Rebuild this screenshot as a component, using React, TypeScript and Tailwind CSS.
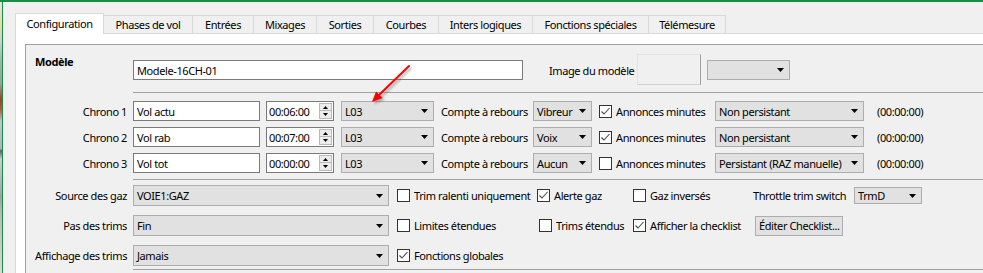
import React from "react";

function Caret() {
  return (
    <svg width="7" height="4" viewBox="0 0 7 4" className="shrink-0">
      <polygon points="0,0 7,0 3.5,4" fill="#000" />
    </svg>
  );
}

function Combo({ text, className }: { text: string; className: string }) {
  return (
    <div
      className={`flex items-center justify-between border border-[#adadad] bg-[#e1e1e1] pl-[3px] pr-[5px] ${className}`}
    >
      <span className="whitespace-nowrap">{text}</span>
      <Caret />
    </div>
  );
}

function TextInput({ text, className }: { text: string; className: string }) {
  return (
    <div className={`flex items-center border border-[#7a7a7a] bg-white pl-[3px] ${className}`}>
      <span className="whitespace-nowrap">{text}</span>
    </div>
  );
}

function Spin({ text }: { text: string }) {
  return (
    <div className="flex h-[20px] w-[68px] items-center justify-between border border-[#7a7a7a] bg-white pl-[2px] pr-[1px]">
      <span className="whitespace-nowrap">{text}</span>
      <div className="flex flex-col gap-0">
        <div className="flex h-[8px] w-[13px] items-center justify-center border border-[#b9b9b9] bg-[#ececec]">
          <svg width="5" height="3" viewBox="0 0 5 3">
            <polygon points="0,3 5,3 2.5,0" fill="#000" />
          </svg>
        </div>
        <div className="flex h-[8px] w-[13px] items-center justify-center border border-t-0 border-[#b9b9b9] bg-[#ececec]">
          <svg width="5" height="3" viewBox="0 0 5 3">
            <polygon points="0,0 5,0 2.5,3" fill="#000" />
          </svg>
        </div>
      </div>
    </div>
  );
}

function Check({ checked }: { checked: boolean }) {
  return (
    <div className="relative h-[13px] w-[13px] shrink-0 border border-[#333] bg-white">
      {checked && (
        <svg width="11" height="11" viewBox="0 0 11 11" className="absolute left-0 top-0">
          <polyline points="1.5,5.5 4,8 9.5,2" fill="none" stroke="#4a4a4a" strokeWidth="1.1" />
        </svg>
      )}
    </div>
  );
}

function CheckItem({ checked, label, className }: { checked: boolean; label: string; className: string }) {
  return (
    <div className={`flex items-center ${className}`}>
      <Check checked={checked} />
      <span className="ml-[4px] whitespace-nowrap">{label}</span>
    </div>
  );
}

const tabs: { label: string; w: string }[] = [
  { label: "Phases de vol", w: "w-[89px]" },
  { label: "Entrées", w: "w-[61px]" },
  { label: "Mixages", w: "w-[63px]" },
  { label: "Sorties", w: "w-[57px]" },
  { label: "Courbes", w: "w-[65px]" },
  { label: "Inters logiques", w: "w-[94px]" },
  { label: "Fonctions spéciales", w: "w-[116px]" },
  { label: "Télémesure", w: "w-[77px]" },
];

const chronos = [
  { n: "Chrono 1", name: "Vol actu", time: "00:06:00", mode: "Vibreur", ann: true, pers: "Non persistant" },
  { n: "Chrono 2", name: "Vol rab", time: "00:07:00", mode: "Voix", ann: true, pers: "Non persistant" },
  { n: "Chrono 3", name: "Vol tot", time: "00:00:00", mode: "Aucun", ann: false, pers: "Persistant (RAZ manuelle)" },
];

export default function App() {
  return (
    <div className="relative h-[273px] w-[983px] overflow-hidden bg-[#f0f0f0] font-['Noto_Sans',sans-serif] text-[11px] leading-none tracking-[-0.4px] text-black">
      <div className="h-[2px] bg-[#1b8a43]" />
      <div className="flex h-[271px]">
        <div className="w-[2px] bg-[linear-gradient(to_bottom,#dfe6e2_0%,#e8dca0_9%,#c9d6d6_14%,#9fb3ad_22%,#8fa8a0_30%,#a53d2a_36%,#b06040_40%,#b9c9cf_44%,#aab8be_54%,#5a6466_55%,#c8d0d0_58%,#9aa6a6_72%,#b8bcbc_78%,#d6dada_100%)]" />
        <div className="w-[1px] bg-[#1b8a43]" />
        <div className="flex flex-1 flex-col pl-[12px] pt-[11px]">
          {/* Tabs */}
          <div className="flex h-[21px] items-end">
            <div className="flex h-[21px] w-[89px] items-center justify-center border border-b-0 border-[#d9d9d9] bg-white pb-[1px]">
              Configuration
            </div>
            {tabs.map((t) => (
              <div
                key={t.label}
                className={`flex h-[19px] items-center justify-center border border-l-0 border-[#d9d9d9] bg-[#f0f0f0] ${t.w}`}
              >
                {t.label}
              </div>
            ))}
            <div className="h-[1px] flex-1 bg-[#d9d9d9]" />
          </div>
          {/* Pane */}
          <div className="flex flex-1 flex-col border-l border-[#d9d9d9] bg-white pl-[9px] pt-[10px]">
            <div className="flex flex-1 flex-col border-l border-t border-[#a0a0a0] bg-[#f0f0f0] pl-[9px]">
              {/* Modèle */}
              <div className="flex h-[47px] items-start pt-[9px]">
                <div className="mt-[-3px] flex h-[20px] w-[98px] items-center font-bold">Modèle</div>
                <TextInput text="Modele-16CH-01" className="mt-[6px] h-[20px] w-[390px]" />
                <div className="ml-[26px] mt-[6px] flex h-[20px] w-[88px] items-center whitespace-nowrap">
                  Image du modèle
                </div>
                <div className="h-[31px] w-[64px] border border-t-[#e3e3e3] border-l-[#e3e3e3] border-r-[#a0a0a0] border-b-[#d0d0d0] bg-[#f0f0f0]" />
                <Combo text="" className="ml-[6px] mt-[6px] h-[20px] w-[83px]" />
              </div>
              <div className="ml-[98px] h-px bg-[#a0a0a0]" />
              {/* Chronos */}
              <div className="flex flex-col gap-[6px] pt-[8px]">
                {chronos.map((c) => (
                  <div key={c.n} className="flex h-[20px] items-center">
                    <div className="w-[92px] whitespace-nowrap text-right">{c.n}</div>
                    <TextInput text={c.name} className="ml-[6px] h-[20px] w-[127px]" />
                    <div className="ml-[6px]">
                      <Spin text={c.time} />
                    </div>
                    <Combo text="L03" className="ml-[7px] h-[20px] w-[93px]" />
                    <div className="ml-[7px] w-[86px] whitespace-nowrap">Compte à rebours</div>
                    <Combo text={c.mode} className="ml-[6px] h-[20px] w-[59px]" />
                    <CheckItem checked={c.ann} label="Annonces minutes" className="ml-[7px] w-[116px]" />
                    <Combo text={c.pers} className="h-[20px] w-[149px]" />
                    <div className="ml-[13px] whitespace-nowrap">(00:00:00)</div>
                  </div>
                ))}
              </div>
              <div className="ml-[98px] mt-[6px] h-px bg-[#a0a0a0]" />
              {/* Bottom */}
              <div className="flex flex-col gap-[9px] pt-[5px]">
                <div className="flex h-[21px] items-center">
                  <div className="w-[92px] whitespace-nowrap text-right">Source des gaz</div>
                  <Combo text="VOIE1:GAZ" className="ml-[6px] h-[21px] w-[256px]" />
                  <CheckItem checked={false} label="Trim ralenti uniquement" className="ml-[8px] w-[140px]" />
                  <CheckItem checked={true} label="Alerte gaz" className="w-[96px]" />
                  <CheckItem checked={false} label="Gaz inversés" className="w-[120px]" />
                  <div className="w-[101px] whitespace-nowrap">Throttle trim switch</div>
                  <Combo text="TrmD" className="h-[17px] w-[68px]" />
                </div>
                <div className="flex h-[21px] items-center">
                  <div className="w-[92px] whitespace-nowrap text-right">Pas des trims</div>
                  <Combo text="Fin" className="ml-[6px] h-[21px] w-[256px]" />
                  <CheckItem checked={false} label="Limites étendues" className="ml-[8px] w-[142px]" />
                  <CheckItem checked={false} label="Trims étendus" className="w-[94px]" />
                  <CheckItem checked={true} label="Afficher la checklist" className="w-[122px]" />
                  <div className="flex h-[20px] w-[88px] items-center border border-[#adadad] bg-[#e1e1e1] pl-[3px] whitespace-nowrap">
                    Éditer Checklist...
                  </div>
                </div>
                <div className="flex h-[21px] items-center">
                  <div className="w-[92px] whitespace-nowrap text-right">Affichage des trims</div>
                  <Combo text="Jamais" className="ml-[6px] h-[21px] w-[256px]" />
                  <CheckItem checked={true} label="Fonctions globales" className="ml-[8px] w-[140px]" />
                </div>
              </div>
              <div className="ml-[98px] mt-[3px] h-px bg-[#a0a0a0]" />
            </div>
          </div>
        </div>
      </div>
      {/* Red annotation arrow */}
      <svg width="983" height="273" className="pointer-events-none absolute left-0 top-0">
        <defs>
          <filter id="sh" x="-20%" y="-20%" width="140%" height="140%">
            <feGaussianBlur stdDeviation="1.2" />
          </filter>
        </defs>
        <g filter="url(#sh)" opacity="0.45" transform="translate(2,2)">
          <line x1="409" y1="66" x2="378" y2="96" stroke="#555" strokeWidth="2" />
          <polygon points="372,102 382.5,98 376,91.5" fill="#555" />
        </g>
        <line x1="409" y1="66" x2="378" y2="96" stroke="#ff0000" strokeWidth="2" strokeLinecap="round" />
        <polygon points="372,102 382.5,98 376,91.5" fill="#ff0000" />
      </svg>
    </div>
  );
}
